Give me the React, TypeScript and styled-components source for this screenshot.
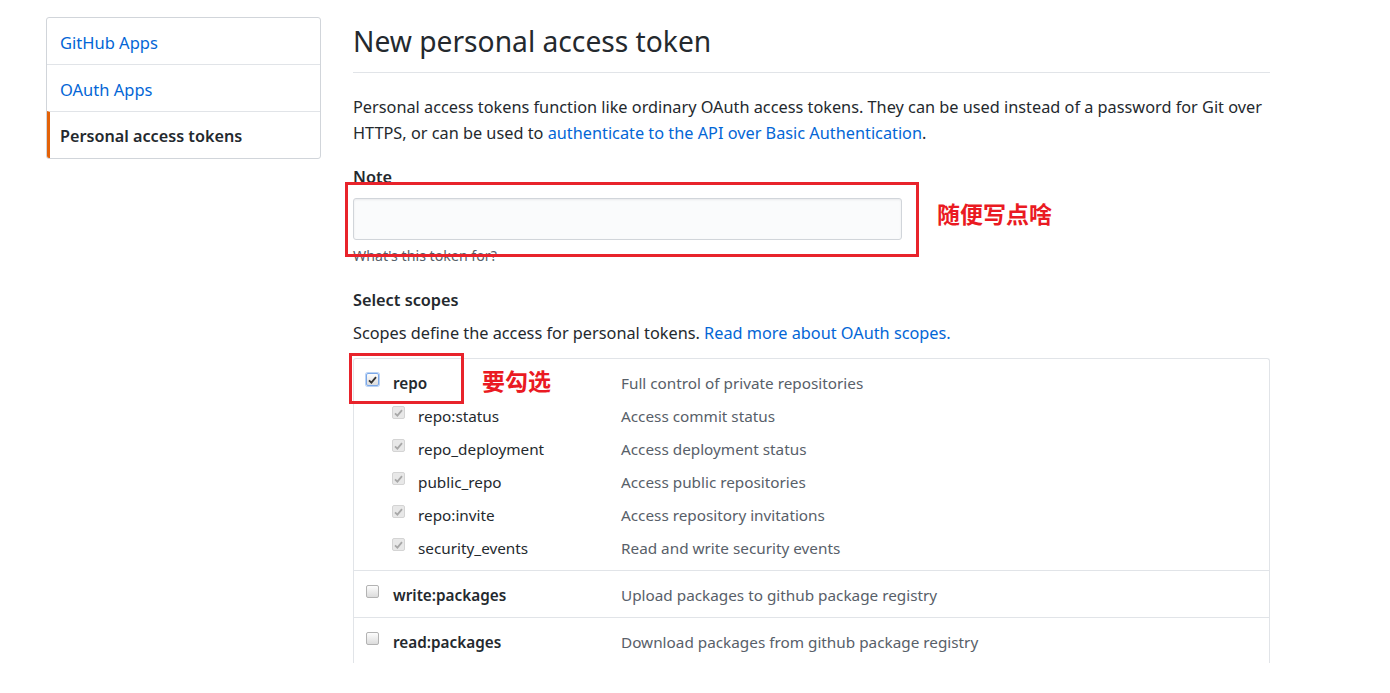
import React from "react";
import styled, { createGlobalStyle } from "styled-components";

const Global = createGlobalStyle`
  html, body { margin: 0; padding: 0; background: #fff; }
  body {
    font-family: "Segoe UI", "Noto Sans", "Liberation Sans", "Noto Sans CJK SC", sans-serif;
    color: #24292e;
    -webkit-font-smoothing: antialiased;
  }
`;

const Page = styled.div`
  display: flex;
  align-items: flex-start;
  padding: 17px 0 0 46px;
  height: 646px;
  overflow: hidden;
`;

const SideNav = styled.nav`
  width: 275px;
  box-sizing: border-box;
  border: 1px solid #d1d5da;
  border-radius: 3px;
  display: flex;
  flex-direction: column;
  overflow: hidden;
`;

const NavItem = styled.a<{ $active?: boolean }>`
  display: block;
  height: 47px;
  box-sizing: border-box;
  padding-top: 3px;
  line-height: 43px;
  padding-left: ${(p) => (p.$active ? "10px" : "13px")};
  font-size: ${(p) => (p.$active ? "16.2px" : "16.5px")};
  text-decoration: none;
  color: ${(p) => (p.$active ? "#24292e" : "#0366d6")};
  font-weight: ${(p) => (p.$active ? 600 : 400)};
  border-left: ${(p) => (p.$active ? "3px solid #e36209" : "none")};
  border-top: 1px solid #e1e4e8;
  &:first-child { border-top: none; height: 46px; }
`;

const Main = styled.main`
  position: relative;
  margin-left: 32px;
  width: 917px;
`;

const Subhead = styled.div`
  border-bottom: 1px solid #e1e4e8;
  height: 56px;
  box-sizing: border-box;
`;

const Title = styled.h1`
  margin: 0;
  font-size: 28.2px;
  font-weight: 400;
  line-height: 48px;
`;

const Intro = styled.p`
  margin: 21px 0 0;
  font-size: 16.3px;
  line-height: 26px;
`;

const Link = styled.a`
  color: #0366d6;
  text-decoration: none;
`;

const Label = styled.div`
  margin-top: 18px;
  font-size: 16.3px;
  line-height: 26px;
  font-weight: 600;
`;

const NoteInput = styled.div`
  margin-top: 8px;
  width: 549px;
  height: 42px;
  box-sizing: border-box;
  background: #fafbfc;
  border: 1px solid #d1d5da;
  border-radius: 3px;
  box-shadow: inset 0 1px 2px rgba(27, 31, 35, 0.075);
`;

const Note = styled.div`
  margin-top: 7px;
  font-size: 14.2px;
  line-height: 18px;
  color: #586069;
`;

const SectionTitle = styled.div`
  margin-top: 22px;
  font-size: 16.3px;
  line-height: 26px;
  font-weight: 600;
`;

const Lead = styled.p`
  margin: 7px 0 0;
  font-size: 16.3px;
  line-height: 26px;
`;

const ScopeTable = styled.div`
  margin-top: 12px;
  border: 1px solid #e1e4e8;
  border-bottom: none;
  border-radius: 3px 3px 0 0;
  height: 305px;
  box-sizing: border-box;
  overflow: hidden;
`;

const ScopeGroup = styled.div`
  padding: 7px 0 6px 12px;
  border-top: 1px solid #e1e4e8;
  &:first-child { border-top: none; }
`;

const ScopeLine = styled.div<{ $sub?: boolean }>`
  display: flex;
  align-items: center;
  height: 33px;
  padding-left: ${(p) => (p.$sub ? "26px" : "0")};
  font-size: 15.3px;
`;

const ScopeName = styled.span<{ $sub?: boolean }>`
  width: ${(p) => (p.$sub ? "203px" : "228px")};
  margin-left: ${(p) => (p.$sub ? "13px" : "14px")};
  font-weight: ${(p) => (p.$sub ? 400 : 600)};
  color: #24292e;
`;

const ScopeDesc = styled.span`
  color: #586069;
`;

const Box = styled.span<{ $kind: "focus" | "disabled" | "empty" }>`
  position: relative;
  top: -3px;
  display: inline-flex;
  align-items: center;
  justify-content: center;
  width: 13px;
  height: 13px;
  flex: none;
  box-sizing: border-box;
  border-radius: 2px;
  border: 1px solid
    ${(p) =>
      p.$kind === "focus" ? "#7aa7e8" : p.$kind === "disabled" ? "#d4d4d4" : "#b3b3b3"};
  background: ${(p) =>
    p.$kind === "disabled"
      ? "#e8e8e8"
      : "linear-gradient(#fdfdfd, #dcdcdc)"};
  box-shadow: ${(p) => (p.$kind === "focus" ? "0 0 0 1px #b9d2f4" : "none")};
`;

const Annot = styled.div<{ $l: number; $t: number; $w: number; $h: number }>`
  position: absolute;
  left: ${(p) => p.$l}px;
  top: ${(p) => p.$t}px;
  width: ${(p) => p.$w}px;
  height: ${(p) => p.$h}px;
  border: 3px solid #e8232b;
  box-sizing: border-box;
  pointer-events: none;
`;

const AnnotText = styled.div<{ $l: number; $t: number; $s: number }>`
  position: absolute;
  left: ${(p) => p.$l}px;
  top: ${(p) => p.$t}px;
  font-family: "Noto Sans CJK SC", sans-serif;
  font-weight: 700;
  font-size: ${(p) => p.$s}px;
  line-height: 1;
  color: #ea1a22;
  white-space: nowrap;
`;

const Check = ({ color }: { color: string }) => (
  <svg width="9" height="8" viewBox="0 0 9 8">
    <path d="M1 4.3 L3.4 6.6 L8 1.2" fill="none" stroke={color} strokeWidth="1.8" />
  </svg>
);

const CheckBox = ({ kind }: { kind: "focus" | "disabled" | "empty" }) => (
  <Box $kind={kind}>
    {kind === "focus" && <Check color="#333" />}
    {kind === "disabled" && <Check color="#a8a8a8" />}
  </Box>
);

const subScopes: [string, string][] = [
  ["repo:status", "Access commit status"],
  ["repo_deployment", "Access deployment status"],
  ["public_repo", "Access public repositories"],
  ["repo:invite", "Access repository invitations"],
  ["security_events", "Read and write security events"],
];

export default function App() {
  return (
    <>
      <Global />
      <Page>
        <SideNav>
          <NavItem>GitHub Apps</NavItem>
          <NavItem>OAuth Apps</NavItem>
          <NavItem $active>Personal access tokens</NavItem>
        </SideNav>
        <Main>
          <Subhead>
            <Title>New personal access token</Title>
          </Subhead>
          <Intro>
            Personal access tokens function like ordinary OAuth access tokens. They can be used
            instead of a password for Git over HTTPS, or can be used to{" "}
            <Link>authenticate to the API over Basic Authentication</Link>.
          </Intro>
          <Label>Note</Label>
          <NoteInput />
          <Note>What's this token for?</Note>
          <SectionTitle>Select scopes</SectionTitle>
          <Lead>
            Scopes define the access for personal tokens.{" "}
            <Link>Read more about OAuth scopes.</Link>
          </Lead>
          <ScopeTable>
            <ScopeGroup>
              <ScopeLine>
                <CheckBox kind="focus" />
                <ScopeName>repo</ScopeName>
                <ScopeDesc>Full control of private repositories</ScopeDesc>
              </ScopeLine>
              {subScopes.map(([n, d]) => (
                <ScopeLine $sub key={n}>
                  <CheckBox kind="disabled" />
                  <ScopeName $sub>{n}</ScopeName>
                  <ScopeDesc>{d}</ScopeDesc>
                </ScopeLine>
              ))}
            </ScopeGroup>
            <ScopeGroup>
              <ScopeLine>
                <CheckBox kind="empty" />
                <ScopeName>write:packages</ScopeName>
                <ScopeDesc>Upload packages to github package registry</ScopeDesc>
              </ScopeLine>
            </ScopeGroup>
            <ScopeGroup>
              <ScopeLine>
                <CheckBox kind="empty" />
                <ScopeName>read:packages</ScopeName>
                <ScopeDesc>Download packages from github package registry</ScopeDesc>
              </ScopeLine>
            </ScopeGroup>
          </ScopeTable>
          <Annot $l={-8} $t={165} $w={574} $h={75} />
          <AnnotText $l={584} $t={185} $s={23}>随便写点啥</AnnotText>
          <Annot $l={-4} $t={336} $w={115} $h={51} />
          <AnnotText $l={129} $t={352} $s={23}>要勾选</AnnotText>
        </Main>
      </Page>
    </>
  );
}
